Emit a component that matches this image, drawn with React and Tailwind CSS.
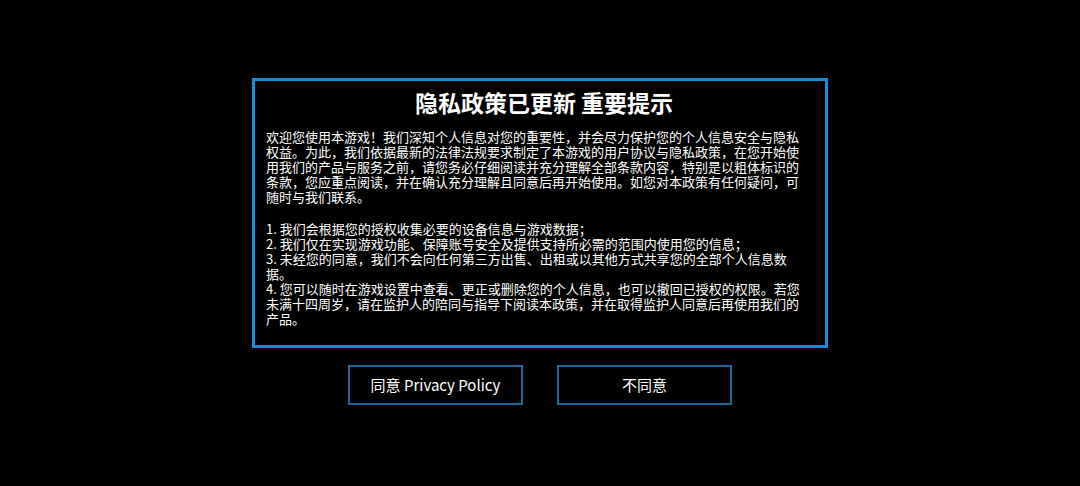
export default function App() {
  const points = [
    "1. 我们会根据您的授权收集必要的设备信息与游戏数据；",
    "2. 我们仅在实现游戏功能、保障账号安全及提供支持所必需的范围内使用您的信息；",
    "3. 未经您的同意，我们不会向任何第三方出售、出租或以其他方式共享您的全部个人信息数据。",
    "4. 您可以随时在游戏设置中查看、更正或删除您的个人信息，也可以撤回已授权的权限。若您未满十四周岁，请在监护人的陪同与指导下阅读本政策，并在取得监护人同意后再使用我们的产品。",
  ].join("\n");

  return (
    <div
      className="w-[1080px] h-[486px] bg-black flex flex-col items-center pt-[78px] text-white"
      style={{ fontFamily: '"Noto Sans CJK SC", "Noto Sans", sans-serif' }}
    >
      {/* Policy panel */}
      <div className="w-[576px] h-[270px] border-[3px] border-[#1a8bd6] flex flex-col overflow-hidden pl-[11px] pr-[19px] pt-[8px]">
        <h1 className="pl-[16px] text-[23px] leading-[26px] font-bold text-center">
          隐私政策已更新 重要提示
        </h1>
        <p className="mt-[14px] text-[13px] leading-[15px]">
          欢迎您使用本游戏！我们深知个人信息对您的重要性，并会尽力保护您的个人信息安全与隐私权益。为此，我们依据最新的法律法规要求制定了本游戏的用户协议与隐私政策，在您开始使用我们的产品与服务之前，请您务必仔细阅读并充分理解全部条款内容，特别是以粗体标识的条款，您应重点阅读，并在确认充分理解且同意后再开始使用。如您对本政策有任何疑问，可随时与我们联系。
        </p>
        {/* Numbered points, one per line */}
        <p className="mt-[17px] text-[13px] leading-[15px] whitespace-pre-line">
          {points}
        </p>
      </div>

      {/* Actions */}
      <div className="mt-[17px] flex gap-[34px]">
        <button className="w-[175px] h-[40px] border-2 border-[#1c6898] text-[15px] leading-[20px] flex items-center justify-center">
          同意 Privacy Policy
        </button>
        <button className="w-[175px] h-[40px] border-2 border-[#1c6898] text-[15px] leading-[20px] flex items-center justify-center">
          不同意
        </button>
      </div>
    </div>
  );
}
